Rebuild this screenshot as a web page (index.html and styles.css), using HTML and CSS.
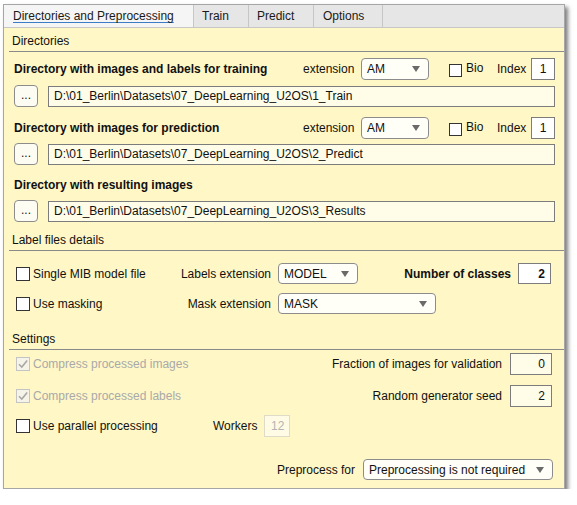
FILE: index.html
```html
<!DOCTYPE html>
<html lang="en">
<head>
  <meta charset="UTF-8">
  <title>Directories and Preprocessing</title>
  <link rel="stylesheet" href="styles.css">
</head>
<body>
  <div class="window">
    <div class="tabs">
      <div class="tab tab-active"><span>Directories and Preprocessing</span></div>
      <div class="tab tab-train">Train</div>
      <div class="tab tab-predict">Predict</div>
      <div class="tab tab-options">Options</div>
    </div>

    <div class="page">
      <!-- Directories -->
      <div class="section-title">Directories</div>

      <div class="row dir-row first">
        <div class="dir-label">Directory with images and labels for training</div>
        <div class="ext-label">extension</div>
        <div class="select sel-ext"><span>AM</span><i class="arrow"></i></div>
        <div class="check bio"><span class="box"></span><span class="bio-text">Bio</span></div>
        <div class="index-label">Index</div>
        <div class="input index">1</div>
      </div>
      <div class="row path-row p1">
        <div class="browse">...</div>
        <div class="input path">D:\01_Berlin\Datasets\07_DeepLearning_U2OS\1_Train</div>
      </div>

      <div class="row dir-row second">
        <div class="dir-label">Directory with images for prediction</div>
        <div class="ext-label">extension</div>
        <div class="select sel-ext"><span>AM</span><i class="arrow"></i></div>
        <div class="check bio"><span class="box"></span><span class="bio-text">Bio</span></div>
        <div class="index-label">Index</div>
        <div class="input index">1</div>
      </div>
      <div class="row path-row p2">
        <div class="browse">...</div>
        <div class="input path">D:\01_Berlin\Datasets\07_DeepLearning_U2OS\2_Predict</div>
      </div>

      <div class="row dir-row third">
        <div class="dir-label">Directory with resulting images</div>
      </div>
      <div class="row path-row p3">
        <div class="browse">...</div>
        <div class="input path">D:\01_Berlin\Datasets\07_DeepLearning_U2OS\3_Results</div>
      </div>

      <!-- Label files details -->
      <div class="section-title labels-title">Label files details</div>

      <div class="row label-row lf1">
        <div class="check check-group"><span class="box"></span>Single MIB model file</div>
        <div class="right-label">Labels extension</div>
        <div class="select sel-model"><span>MODEL</span><i class="arrow"></i></div>
        <div class="classes-label">Number of classes</div>
        <div class="input classes">2</div>
      </div>
      <div class="row label-row lf2">
        <div class="check check-group"><span class="box"></span>Use masking</div>
        <div class="right-label">Mask extension</div>
        <div class="select sel-mask"><span>MASK</span><i class="arrow"></i></div>
      </div>

      <!-- Settings -->
      <div class="section-title settings-title">Settings</div>

      <div class="row set-row s1">
        <div class="check disabled"><span class="box checked"><svg width="12" height="12" viewBox="0 0 12 12"><path d="M2 6.2 L4.8 9 L10.2 2.6" fill="none" stroke="#a8a8a8" stroke-width="1.6"/></svg></span>Compress processed images</div>
        <div class="set-label">Fraction of images for validation</div>
        <div class="input num">0</div>
      </div>
      <div class="row set-row s2">
        <div class="check disabled"><span class="box checked"><svg width="12" height="12" viewBox="0 0 12 12"><path d="M2 6.2 L4.8 9 L10.2 2.6" fill="none" stroke="#a8a8a8" stroke-width="1.6"/></svg></span>Compress processed labels</div>
        <div class="set-label">Random generator seed</div>
        <div class="input num">2</div>
      </div>
      <div class="row set-row s3">
        <div class="check workers-group"><span class="box"></span>Use parallel processing</div>
        <div class="workers-label">Workers</div>
        <div class="input workers">12</div>
      </div>

      <div class="row preprocess-row">
        <div class="pre-label">Preprocess for</div>
        <div class="select sel-pre"><span>Preprocessing is not required</span><i class="arrow"></i></div>
      </div>
    </div>
  </div>
</body>
</html>
```

FILE: styles.css
```css
body {
  margin: 0;
  background: #fff;
  font-family: "Liberation Sans", Arial, sans-serif;
  font-size: 12px;
  color: #111;
}

.window {
  margin: 4px 0 0 3px;
  width: 562px;
  height: 485px;
  box-sizing: border-box;
  border: 1px solid #a6a6a6;
  background: #fff7c6;
  box-shadow: 3px 3px 4px rgba(0, 0, 0, 0.5);
  display: flex;
  flex-direction: column;
}

/* tab strip */
.tabs {
  display: flex;
  height: 23px;
  box-sizing: border-box;
  background: #e6e6e6;
  border-bottom: 1px solid #c6c6c6;
}

.tab {
  box-sizing: border-box;
  height: 22px;
  line-height: 22px;
  padding-left: 9px;
  border-right: 1px solid #c6c6c6;
  color: #1a1a1a;
}

.tab-active {
  width: 190px;
  background: #f5f5f5;
}

.tab-active span {
  text-decoration: underline;
  text-decoration-color: #3b7dc4;
  text-underline-offset: 2px;
}

.tab-train { width: 55px; padding-left: 8px; }
.tab-predict { width: 65px; padding-left: 8px; }
.tab-options { width: 69px; }

/* page */
.page {
  display: flex;
  flex-direction: column;
  flex: 1;
}

.section-title {
  margin: 5px 0 0 5px;
  padding: 0 0 2px 3px;
  line-height: 16px;
  border-bottom: 1px solid #8a8a8a;
  color: #111;
}

.labels-title { margin-top: 10px; }
.settings-title { margin-top: 17px; }

.row {
  display: flex;
  align-items: center;
  flex: none;
  height: 22px;
}

/* directory rows */
.dir-row { padding-left: 10px; }
.dir-row.first { margin-top: 6px; }
.dir-row.second { margin-top: 10px; }
.dir-row.third { margin-top: 9px; }

.dir-label {
  width: 289px;
  font-weight: bold;
  white-space: nowrap;
}

.ext-label { width: 58px; }

.index-label { width: 34px; }

.path-row { padding-left: 10px; }
.p1 { margin-top: 5px; }
.p2, .p3 { margin-top: 4px; }

.browse {
  width: 24px;
  height: 22px;
  box-sizing: border-box;
  border: 1px solid #8c8c8c;
  border-radius: 4px;
  background: #fdfcf2;
  text-align: center;
  line-height: 19px;
}

/* inputs */
.input {
  box-sizing: border-box;
  border: 1px solid #7c7c7c;
  height: 22px;
  line-height: 20px;
  padding: 0 5px;
  white-space: nowrap;
}

.path {
  width: 507px;
  height: 21px;
  line-height: 19px;
  margin-left: 10px;
  background: #fffce8;
}

.index {
  width: 24px;
  background: #fff;
  text-align: center;
  padding: 0;
}

.classes {
  width: 33px;
  height: 21px;
  background: #fff;
  text-align: right;
  font-weight: bold;
}

.num {
  width: 42px;
  background: #fffce8;
  text-align: right;
  padding-right: 6px;
}

.workers {
  width: 26px;
  background: #fffbe4;
  border-color: #dedcc8;
  color: #b4b4b4;
  text-align: right;
}

/* dropdowns */
.select {
  box-sizing: border-box;
  height: 22px;
  border: 1px solid #8c8c8c;
  border-radius: 4px;
  background: #fffff8;
  display: flex;
  align-items: center;
  justify-content: space-between;
  padding: 0 8px 0 5px;
}

.arrow {
  width: 0;
  height: 0;
  border-left: 4px solid transparent;
  border-right: 4px solid transparent;
  border-top: 6px solid #6a6a6a;
}

.sel-ext { width: 68px; }
.sel-model { width: 80px; height: 21px; }
.sel-mask { width: 158px; height: 21px; }
.sel-pre { width: 190px; height: 21px; }

/* checkboxes */
.check {
  display: flex;
  align-items: center;
  white-space: nowrap;
}

.box {
  width: 14px;
  height: 14px;
  box-sizing: border-box;
  border: 1px solid #333;
  background: #fff;
  margin-right: 3px;
  display: flex;
  align-items: center;
  justify-content: center;
}

.bio { margin-left: 20px; }
.bio .box { width: 13px; height: 13px; margin-right: 4px; margin-top: 3px; }
.bio-text { width: 31px; margin-top: -2px; }

.disabled { color: #a9a9a9; }

.disabled .box {
  border-color: #c4c4c4;
  background: #f6f4e8;
}

/* label file rows */
.label-row { padding-left: 12px; height: 21px; }
.lf1 { margin-top: 12px; }
.lf2 { margin-top: 9px; }

.check-group { width: 159px; }

.right-label {
  width: 96px;
  text-align: right;
  margin-right: 7px;
}

.classes-label {
  width: 153px;
  text-align: right;
  margin-right: 7px;
  font-weight: bold;
}

/* settings rows */
.set-row { padding: 0 12px 0 12px; }
.s1 { margin-top: 3px; }
.s2 { margin-top: 10px; }
.s3 { margin-top: 8px; }

.set-label {
  margin-left: auto;
  margin-right: 8px;
}

.workers-group { width: 197px; }
.workers-label { margin-right: 7px; }

.preprocess-row {
  margin-top: 22px;
  height: 21px;
  justify-content: flex-end;
  padding-right: 11px;
}

.pre-label { margin-right: 8px; }
```
